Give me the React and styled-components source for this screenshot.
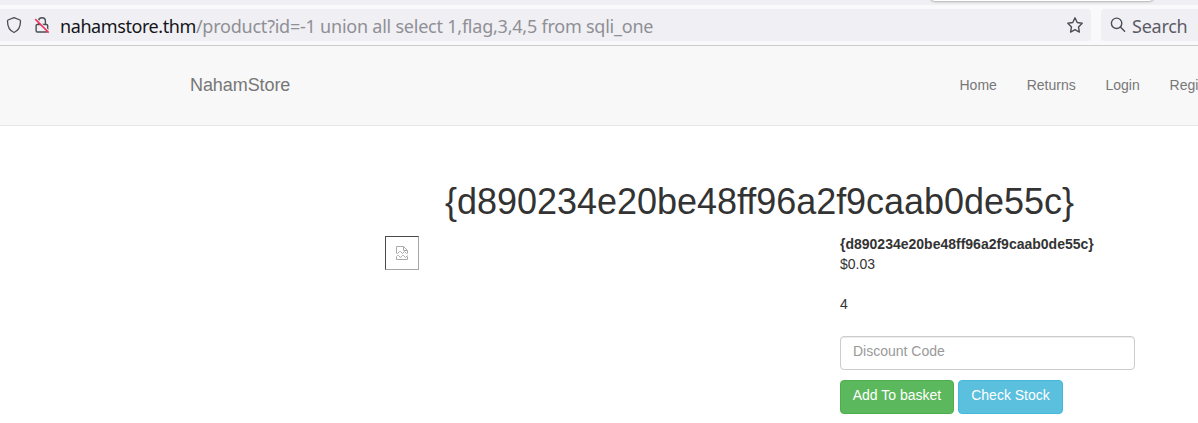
import React from "react";
import styled, { createGlobalStyle } from "styled-components";

const GlobalStyle = createGlobalStyle`
  *, *::before, *::after { box-sizing: border-box; }
  html, body { margin: 0; background: #fff; overflow: hidden; }
  body {
    font-family: "Liberation Sans", Arial, sans-serif;
    font-size: 14px;
    line-height: 20px;
    color: #333;
  }
`;

const Window = styled.div`
  width: 1198px;
  height: 423px;
  overflow: hidden;
`;

const TabStrip = styled.div`
  display: flex;
  justify-content: flex-end;
  height: 5px;
  padding-right: 45px;
  overflow: hidden;
  background: #f0f0f4;
`;

const ActiveTab = styled.div`
  width: 222px;
  height: 8px;
  margin-top: -7px;
  border-radius: 0 0 4px 4px;
  background: #fff;
  box-shadow: 0 0 3px rgba(0, 0, 0, 0.55);
`;

const Toolbar = styled.div`
  display: flex;
  gap: 10px;
  height: 41px;
  padding-top: 4px;
  background: #f9f9fb;
  border-bottom: 1px solid #ccc;
`;

const Field = styled.div`
  display: flex;
  flex: none;
  align-items: center;
  height: 32px;
  width: ${(p) => p.$width}px;
  padding: ${(p) => p.$padding};
  border-radius: ${(p) => p.$radius};
  background: #f0f0f4;
  color: #5b5b66;
  font-family: "Noto Sans", sans-serif;
  font-size: 18px;
  line-height: 32px;
  white-space: pre;

  svg { display: block; flex: none; }
`;

const Url = styled.span`
  flex: 1;
  margin-left: 10px;
  padding-top: 1px;
  color: #8f8f95;
  letter-spacing: -0.23px;
`;

const Host = styled.span`
  color: #15141a;
  letter-spacing: -0.42px;
`;

const SearchLabel = styled.span`
  margin-left: 6px;
  padding-top: 1px;
  letter-spacing: -0.25px;
`;

const SiteIdentity = styled.span`
  display: flex;
  gap: 12px;
`;

const Navbar = styled.nav`
  display: flex;
  justify-content: space-between;
  width: 1346px;
  height: 80px;
  padding: 29px 82px 0 190px;
  background: #f8f8f8;
  border-bottom: 1px solid #e7e7e7;
  color: #777;
`;

const Brand = styled.span`
  font-size: 18px;
  letter-spacing: -0.08px;
`;

const NavLinks = styled.div`
  display: flex;
  flex: none;
  gap: 29.8px;
  width: 304.5px;
  white-space: nowrap;
`;

const Container = styled.main`
  width: 1170px;
  margin-left: 175px;
  padding: 0 15px;
`;

const Title = styled.h1`
  margin: 0;
  padding: 56px 1px 0 0;
  height: 108px;
  font-size: 36px;
  font-weight: 400;
  line-height: 40px;
  letter-spacing: -0.03px;
  text-align: center;
`;

const Product = styled.div`
  display: grid;
  grid-template-columns: 455px 295px;
  margin-left: 195px;
`;

const MissingImage = styled.div`
  display: grid;
  place-items: center;
  width: 34px;
  height: 34px;
  margin-top: 2px;
  border: 1px solid;
  border-color: #4a4a4a #a6a6a6 #a6a6a6 #4a4a4a;
`;

const Details = styled.div`
  display: flex;
  flex-direction: column;
`;

const Description = styled.div`
  margin: 20px 0 22px;
`;

const DiscountInput = styled.input`
  width: 295px;
  height: 34px;
  padding: 3px 12px 7px;
  border: 1px solid #ccc;
  border-radius: 4px;
  background: #fff;
  box-shadow: inset 0 1px 1px rgba(0, 0, 0, 0.075);
  color: #555;
  font: inherit;

  &::placeholder { color: #999; opacity: 1; }
`;

const Actions = styled.div`
  display: flex;
  gap: 4px;
  margin-top: 10px;
`;

const Button = styled.button`
  width: ${(p) => p.$width}px;
  height: 34px;
  padding: 4px 0 8px;
  border: 1px solid ${(p) => p.$border};
  border-radius: 4px;
  background: ${(p) => p.$color};
  color: #fff;
  font: inherit;
  white-space: nowrap;
`;

const ShieldIcon = () => (
  <svg width="16" height="18" viewBox="0 0 16 18" fill="none" stroke="#4c4c55" strokeWidth="1.3" strokeLinejoin="round">
    <path d="M8 1.7 14 4Q14.5 4.3 14.5 5.1C14.5 10.7 12.2 14.9 8 16.5C3.8 14.9 1.5 10.7 1.5 5.1Q1.5 4.3 2 4Z" />
  </svg>
);

const InsecureIcon = () => (
  <svg width="16" height="18" viewBox="0 0 16 18" fill="none">
    <path d="M3.3 8.5h9.2q1.2 0 1.2 1.2v5.1q0 1.2-1.2 1.2H3.3q-1.2 0-1.2-1.2V9.7q0-1.2 1.2-1.2ZM4.6 8.2V5.2a3.4 3.4 0 0 1 6.8 0v3.2" stroke="#4c4c55" strokeWidth="1.4" strokeLinejoin="round" />
    <path d="M1.9 2.4 15.4 15.8" stroke="#f0f0f4" strokeWidth="1.4" />
    <path d="M1.2 3.1 14.7 16.6" stroke="#f0325c" strokeWidth="1.5" />
  </svg>
);

const StarIcon = () => (
  <svg width="17" height="18" viewBox="0 0 17 18" fill="none" stroke="#4c4c55" strokeWidth="1.4" strokeLinejoin="round">
    <path d="m9 1.8 2.2 4.7 5 .7-3.7 3.7.9 5.2-4.4-2.4-4.4 2.4.9-5.2-3.7-3.7 5-.7Z" />
  </svg>
);

const SearchIcon = () => (
  <svg width="16" height="16" viewBox="0 0 16 16" fill="none" stroke="#4c4c55" strokeWidth="1.4" strokeLinecap="round">
    <circle cx="6.6" cy="6.3" r="5.2" />
    <path d="m10.4 10.1 4.2 4.2" />
  </svg>
);

const BrokenImageIcon = () => (
  <svg width="12" height="14" viewBox="0 0 12 14" fill="none" stroke="#aaa">
    <path d="M.5 7V.5h7l4 4V7M7.5.5v4h4M.5 10.5v3h11v-3" />
    <path d="M.5 7.5h1l2-2h1l2 2 2-2 2 2h1M.5 10.5l1-1h1l2 2 2-2h1l2 2 2-2" />
  </svg>
);

export default function App() {
  return (
    <Window>
      <GlobalStyle />
      <TabStrip><ActiveTab /></TabStrip>
      <Toolbar>
        <Field $width={1091} $padding="0 8px 0 6px" $radius="0 4px 4px 0">
          <SiteIdentity>
            <ShieldIcon />
            <InsecureIcon />
          </SiteIdentity>
          <Url><Host>nahamstore.thm</Host>/product?id=-1 union all select 1,flag,3,4,5 from sqli_one</Url>
          <StarIcon />
        </Field>
        <Field $width={97} $padding="0 0 0 9px" $radius="4px 0 0 4px">
          <SearchIcon />
          <SearchLabel>Search</SearchLabel>
        </Field>
      </Toolbar>
      <Navbar>
        <Brand>NahamStore</Brand>
        <NavLinks>
          <span>Home</span>
          <span>Returns</span>
          <span>Login</span>
          <span>Register</span>
        </NavLinks>
      </Navbar>
      <Container>
        <Title>{"{d890234e20be48ff96a2f9caab0de55c}"}</Title>
        <Product>
          <MissingImage><BrokenImageIcon /></MissingImage>
          <Details>
            <strong>{"{d890234e20be48ff96a2f9caab0de55c}"}</strong>
            <span>$0.03</span>
            <Description>4</Description>
            <DiscountInput placeholder="Discount Code" />
            <Actions>
              <Button $width={114} $color="#5cb85c" $border="#4cae4c">Add To basket</Button>
              <Button $width={105} $color="#5bc0de" $border="#46b8da">Check Stock</Button>
            </Actions>
          </Details>
        </Product>
      </Container>
    </Window>
  );
}
